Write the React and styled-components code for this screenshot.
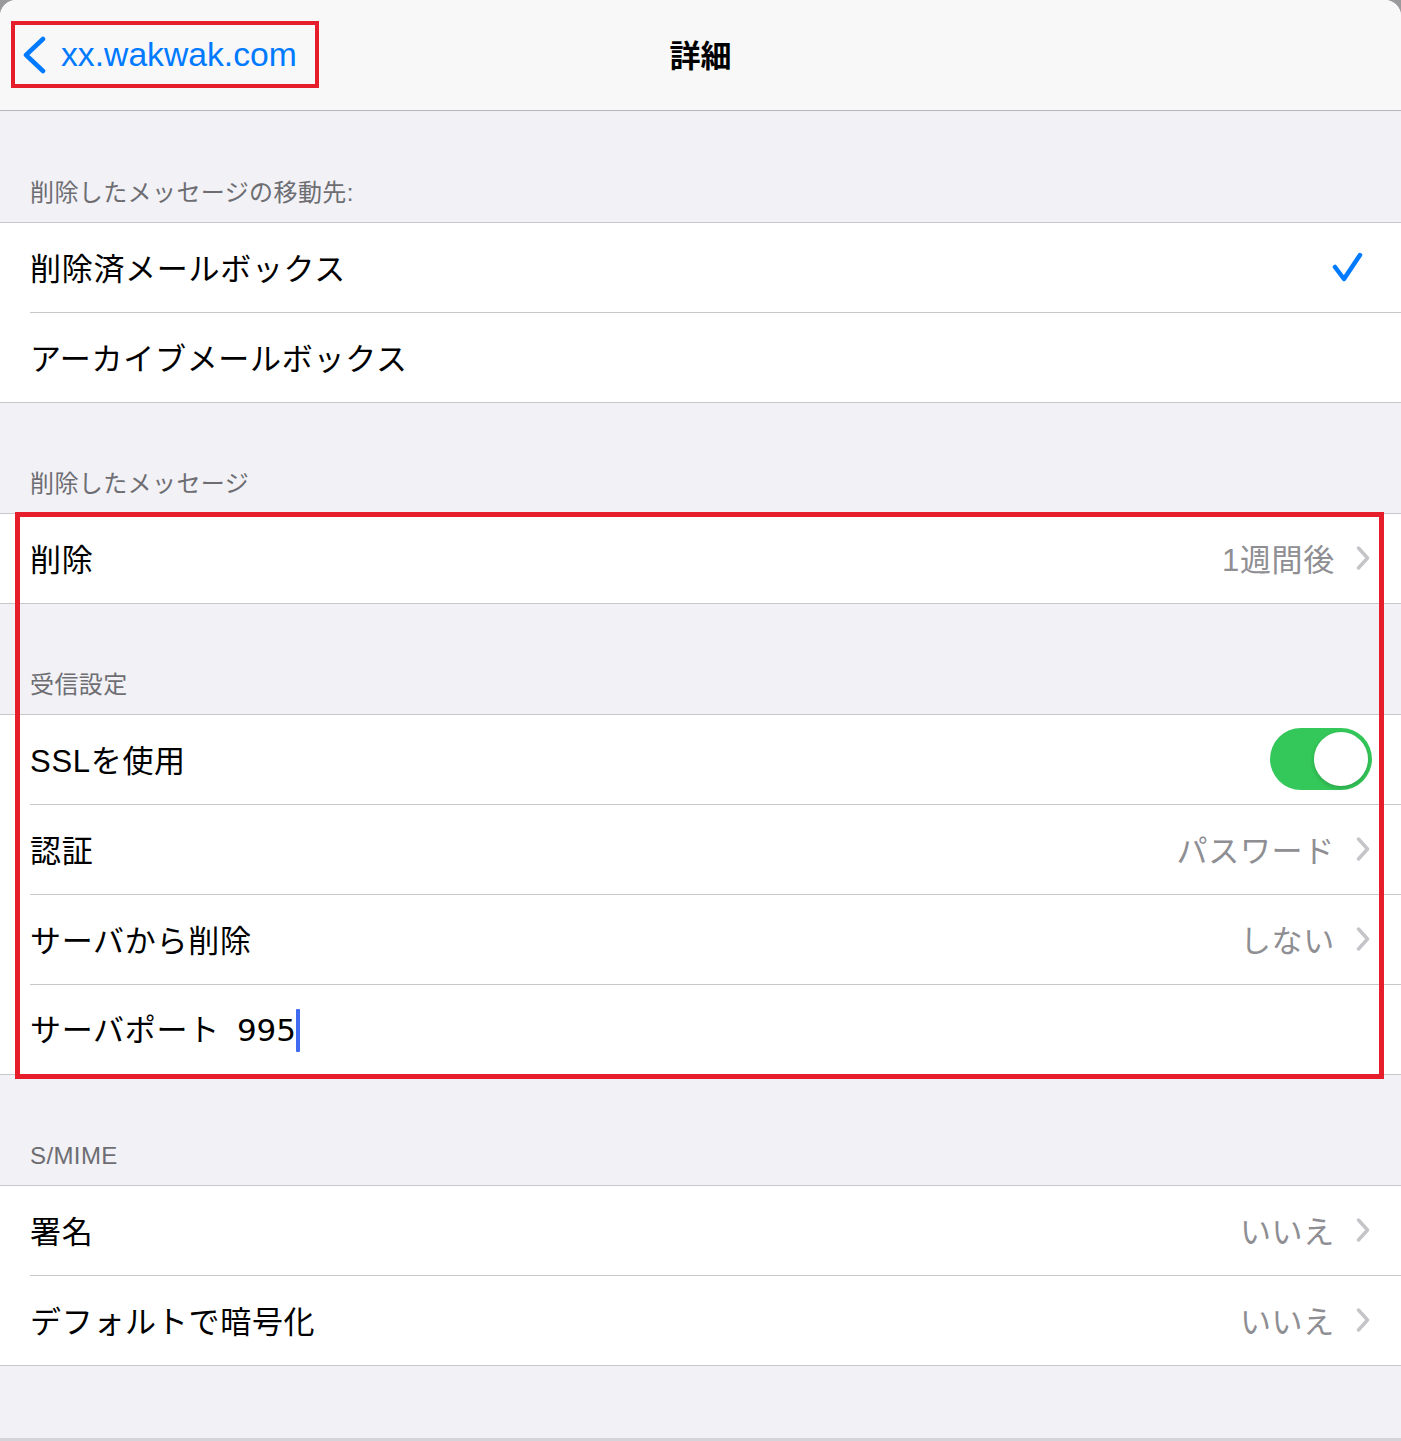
import React from "react";
import styled, { createGlobalStyle } from "styled-components";

const Global = createGlobalStyle`
  html, body { margin: 0; padding: 0; background: #9a9a9c; }
  body { font-family: "Liberation Sans", "Noto Sans CJK JP", sans-serif; -webkit-font-smoothing: antialiased; }
  * { box-sizing: border-box; }
`;

const Screen = styled.div`
  width: 1401px;
  height: 1441px;
  overflow: hidden;
  background: #f1f1f6;
  border-radius: 16px 16px 0 0;
  display: flex;
  flex-direction: column;
`;

const NavBar = styled.header`
  height: 111px;
  flex: none;
  background: #f8f8f8;
  border-bottom: 1px solid #b8b8bc;
  display: grid;
  grid-template-columns: 1fr auto 1fr;
  align-items: center;
  padding-left: 11px;
`;

const BackButton = styled.div`
  position: relative;
  justify-self: start;
  height: 67px;
  display: flex;
  align-items: center;
  gap: 15px;
  padding: 0 22px 0 11px;
  color: #007aff;
  font-size: 33.7px;
  margin-top: -1px;
  &::after {
    content: "";
    position: absolute;
    inset: 0;
    border: 4px solid #e61e2b;
  }
`;

const Title = styled.h1`
  margin: 0 0 4px -11px;
  font-size: 31px;
  font-weight: 700;
  color: #000;
`;

const SectionHeader = styled.div`
  height: ${(p) => p.$h || 110}px;
  flex: none;
  display: flex;
  align-items: flex-end;
  padding: 0 30px 15px;
  font-size: 24px;
  line-height: 29px;
  letter-spacing: 0.4px;
  color: #6d6d72;
`;

const Group = styled.section`
  flex: none;
  background: #fff;
  border-top: 1px solid #c8c7cc;
  border-bottom: 1px solid #c8c7cc;
`;

const Row = styled.div`
  height: ${(p) => (p.$last ? 89 : 90)}px;
  margin-left: 30px;
  padding: 0 29px 2px 0;
  display: flex;
  align-items: center;
  border-bottom: ${(p) => (p.$last ? "none" : "1px solid #c8c7cc")};
  font-size: 31px;
  letter-spacing: 0.7px;
  color: #000;
`;

const Label = styled.span`
  flex: 1;
  white-space: nowrap;
`;

const Value = styled.span`
  color: #8e8e93;
  margin-right: 21px;
  letter-spacing: 0.7px;
`;

const Marked = styled.div`
  position: relative;
  flex: none;
  &::after {
    content: "";
    position: absolute;
    top: -1px;
    left: 15px;
    right: 17px;
    bottom: -4px;
    border: 5px solid #e61e2b;
    pointer-events: none;
  }
`;

const Toggle = styled.div`
  width: 102px;
  height: 62px;
  border-radius: 31px;
  background: #34c759;
  padding: 4px;
  display: flex;
  justify-content: flex-end;
`;

const Knob = styled.div`
  width: 54px;
  height: 54px;
  border-radius: 50%;
  background: #fff;
  box-shadow: 0 2px 4px rgba(0, 0, 0, 0.18);
`;

const PortValue = styled.span`
  margin-left: 17px;
  display: inline-flex;
  align-items: center;
  font-family: "DejaVu Sans", sans-serif;
  letter-spacing: 0;
`;

const Caret = styled.span`
  display: inline-block;
  width: 4px;
  height: 43px;
  background: #3f6bf2;
  border-radius: 1px;
`;

const Footer = styled.div`
  flex: 1;
  border-bottom: 3px solid #d4d4da;
`;

const Chevron = () => (
  <svg width="14" height="24" viewBox="0 0 14 24" style={{ marginRight: 2, flex: "none" }}>
    <path d="M2.5 2 L11.5 12 L2.5 22" fill="none" stroke="#c4c4c9" strokeWidth="3.4" strokeLinecap="round" strokeLinejoin="round" />
  </svg>
);

const BackChevron = () => (
  <svg width="24" height="38" viewBox="0 0 24 38">
    <path d="M21 3 L4 19 L21 35" fill="none" stroke="#007aff" strokeWidth="4.5" strokeLinecap="round" strokeLinejoin="round" />
  </svg>
);

const Check = () => (
  <svg width="32" height="32" viewBox="0 0 32 32" style={{ marginRight: 9 }}>
    <path d="M4 16 L13 28 L29 4" fill="none" stroke="#007aff" strokeWidth="4.5" strokeLinecap="round" strokeLinejoin="round" />
  </svg>
);

const LinkRow = ({ label, value, last }) => (
  <Row $last={last}>
    <Label>{label}</Label>
    <Value>{value}</Value>
    <Chevron />
  </Row>
);

export default function App() {
  return (
    <>
      <Global />
      <Screen>
        <NavBar>
          <BackButton>
            <BackChevron />
            <span>xx.wakwak.com</span>
          </BackButton>
          <Title>詳細</Title>
          <div />
        </NavBar>

        <SectionHeader $h={111}>削除したメッセージの移動先:</SectionHeader>
        <Group>
          <Row>
            <Label>削除済メールボックス</Label>
            <Check />
          </Row>
          <Row $last>
            <Label>アーカイブメールボックス</Label>
          </Row>
        </Group>

        <SectionHeader>削除したメッセージ</SectionHeader>
        <Marked>
          <Group>
            <LinkRow label="削除" value="1週間後" last />
          </Group>
          <SectionHeader>受信設定</SectionHeader>
          <Group>
            <Row>
              <Label>SSLを使用</Label>
              <Toggle>
                <Knob />
              </Toggle>
            </Row>
            <LinkRow label="認証" value="パスワード" />
            <LinkRow label="サーバから削除" value="しない" />
            <Row $last>
              <Label>
                サーバポート
                <PortValue>
                  995
                  <Caret />
                </PortValue>
              </Label>
            </Row>
          </Group>
        </Marked>

        <SectionHeader>S/MIME</SectionHeader>
        <Group>
          <LinkRow label="署名" value="いいえ" />
          <LinkRow label="デフォルトで暗号化" value="いいえ" last />
        </Group>
        <Footer />
      </Screen>
    </>
  );
}
